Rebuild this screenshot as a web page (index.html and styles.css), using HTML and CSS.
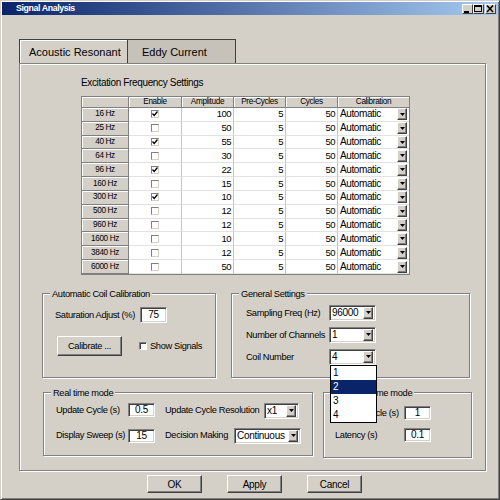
FILE: index.html
```html
<!DOCTYPE html>
<html>
<head>
<meta charset="utf-8">
<link rel="stylesheet" href="styles.css">
</head>
<body>
<div class="window">
  <div class="titlebar">
    <span class="title">Signal Analysis</span>
    <div class="wbtns">
      <span class="wb"><svg width="9" height="8" viewBox="0 0 9 8"><rect x="1" y="6" width="5" height="2" fill="#000"/></svg></span>
      <span class="wb"><svg width="9" height="8" viewBox="0 0 9 8"><rect x="0.5" y="0.5" width="7" height="6" fill="none" stroke="#000"/><rect x="0" y="0" width="8" height="2" fill="#000"/></svg></span>
      <span class="wb close"><svg width="9" height="8" viewBox="0 0 9 8"><path d="M1 0.5l6 6.5M7 0.5l-6 6.5" stroke="#000" stroke-width="1.6"/></svg></span>
    </div>
  </div>
  <div class="client">
    <div class="tabs">
      <div class="tab t1">Acoustic Resonant</div>
      <div class="tab t2">Eddy Current</div>
    </div>
    <div class="panel">
      <div class="section-title">Excitation Frequency Settings</div>
      <div class="grid">
        <div class="h"></div><div class="h">Enable</div><div class="h">Amplitude</div><div class="h">Pre-Cycles</div><div class="h">Cycles</div><div class="h last">Calibration</div>

        <div class="h">16 Hz</div><div class="c cbc"><span class="cb"><svg width="6" height="6" viewBox="0 0 6 6"><path d="M0.5 2.5l1.7 2 3.3-4" stroke="#000" stroke-width="1.3" fill="none"/></svg></span></div><div class="c">100</div><div class="c">5</div><div class="c">50</div><div class="c cal"><span>Automatic</span><span class="dd"><svg width="5" height="3" viewBox="0 0 5 3"><path d="M0 0h5L2.5 3z"/></svg></span></div>
        <div class="h">25 Hz</div><div class="c cbc"><span class="cb"></span></div><div class="c">50</div><div class="c">5</div><div class="c">50</div><div class="c cal"><span>Automatic</span><span class="dd"><svg width="5" height="3" viewBox="0 0 5 3"><path d="M0 0h5L2.5 3z"/></svg></span></div>
        <div class="h">40 Hz</div><div class="c cbc"><span class="cb"><svg width="6" height="6" viewBox="0 0 6 6"><path d="M0.5 2.5l1.7 2 3.3-4" stroke="#000" stroke-width="1.3" fill="none"/></svg></span></div><div class="c">55</div><div class="c">5</div><div class="c">50</div><div class="c cal"><span>Automatic</span><span class="dd"><svg width="5" height="3" viewBox="0 0 5 3"><path d="M0 0h5L2.5 3z"/></svg></span></div>
        <div class="h">64 Hz</div><div class="c cbc"><span class="cb"></span></div><div class="c">30</div><div class="c">5</div><div class="c">50</div><div class="c cal"><span>Automatic</span><span class="dd"><svg width="5" height="3" viewBox="0 0 5 3"><path d="M0 0h5L2.5 3z"/></svg></span></div>
        <div class="h">96 Hz</div><div class="c cbc"><span class="cb"><svg width="6" height="6" viewBox="0 0 6 6"><path d="M0.5 2.5l1.7 2 3.3-4" stroke="#000" stroke-width="1.3" fill="none"/></svg></span></div><div class="c">22</div><div class="c">5</div><div class="c">50</div><div class="c cal"><span>Automatic</span><span class="dd"><svg width="5" height="3" viewBox="0 0 5 3"><path d="M0 0h5L2.5 3z"/></svg></span></div>
        <div class="h">160 Hz</div><div class="c cbc"><span class="cb"></span></div><div class="c">15</div><div class="c">5</div><div class="c">50</div><div class="c cal"><span>Automatic</span><span class="dd"><svg width="5" height="3" viewBox="0 0 5 3"><path d="M0 0h5L2.5 3z"/></svg></span></div>
        <div class="h">300 Hz</div><div class="c cbc"><span class="cb"><svg width="6" height="6" viewBox="0 0 6 6"><path d="M0.5 2.5l1.7 2 3.3-4" stroke="#000" stroke-width="1.3" fill="none"/></svg></span></div><div class="c">10</div><div class="c">5</div><div class="c">50</div><div class="c cal"><span>Automatic</span><span class="dd"><svg width="5" height="3" viewBox="0 0 5 3"><path d="M0 0h5L2.5 3z"/></svg></span></div>
        <div class="h">500 Hz</div><div class="c cbc"><span class="cb"></span></div><div class="c">12</div><div class="c">5</div><div class="c">50</div><div class="c cal"><span>Automatic</span><span class="dd"><svg width="5" height="3" viewBox="0 0 5 3"><path d="M0 0h5L2.5 3z"/></svg></span></div>
        <div class="h">960 Hz</div><div class="c cbc"><span class="cb"></span></div><div class="c">12</div><div class="c">5</div><div class="c">50</div><div class="c cal"><span>Automatic</span><span class="dd"><svg width="5" height="3" viewBox="0 0 5 3"><path d="M0 0h5L2.5 3z"/></svg></span></div>
        <div class="h">1600 Hz</div><div class="c cbc"><span class="cb"></span></div><div class="c">10</div><div class="c">5</div><div class="c">50</div><div class="c cal"><span>Automatic</span><span class="dd"><svg width="5" height="3" viewBox="0 0 5 3"><path d="M0 0h5L2.5 3z"/></svg></span></div>
        <div class="h">3840 Hz</div><div class="c cbc"><span class="cb"></span></div><div class="c">12</div><div class="c">5</div><div class="c">50</div><div class="c cal"><span>Automatic</span><span class="dd"><svg width="5" height="3" viewBox="0 0 5 3"><path d="M0 0h5L2.5 3z"/></svg></span></div>
        <div class="h">6000 Hz</div><div class="c cbc"><span class="cb"></span></div><div class="c">50</div><div class="c">5</div><div class="c">50</div><div class="c cal"><span>Automatic</span><span class="dd"><svg width="5" height="3" viewBox="0 0 5 3"><path d="M0 0h5L2.5 3z"/></svg></span></div>
      </div>

      <div class="grow1">
        <fieldset class="group acc">
          <legend>Automatic Coil Calibration</legend>
          <div class="frow r-sat">
            <span class="lbl w-sat">Saturation Adjust (%)</span>
            <span class="tb tb-sat">75</span>
          </div>
          <div class="frow r-cal">
            <span class="btn btn-cal">Calibrate ...</span>
            <span class="chk"></span>
            <span class="lbl">Show Signals</span>
          </div>
        </fieldset>
        <fieldset class="group gen">
          <legend>General Settings</legend>
          <div class="frow r-gen first">
            <span class="lbl w-gen">Sampling Freq (Hz)</span>
            <span class="select s47"><span class="val">96000</span><span class="dd"><svg width="5" height="3" viewBox="0 0 5 3"><path d="M0 0h5L2.5 3z"/></svg></span></span>
          </div>
          <div class="frow r-gen">
            <span class="lbl w-gen">Number of Channels</span>
            <span class="select s47"><span class="val">1</span><span class="dd"><svg width="5" height="3" viewBox="0 0 5 3"><path d="M0 0h5L2.5 3z"/></svg></span></span>
          </div>
          <div class="frow r-gen">
            <span class="lbl w-gen">Coil Number</span>
            <span class="select s47 open"><span class="val">4</span><span class="dd"><svg width="5" height="3" viewBox="0 0 5 3"><path d="M0 0h5L2.5 3z"/></svg></span>
              <span class="droplist">
                <span class="item">1</span>
                <span class="item sel">2</span>
                <span class="item">3</span>
                <span class="item">4</span>
              </span>
            </span>
          </div>
        </fieldset>
      </div>

      <div class="grow2">
        <fieldset class="group rt1">
          <legend>Real time mode</legend>
          <div class="frow r-rt first">
            <span class="lbl w-rt1">Update Cycle (s)</span>
            <span class="tb tb-rt">0.5</span>
            <span class="lbl w-res">Update Cycle Resolution</span>
            <span class="select s35"><span class="val">x1</span><span class="dd"><svg width="5" height="3" viewBox="0 0 5 3"><path d="M0 0h5L2.5 3z"/></svg></span></span>
          </div>
          <div class="frow r-rt second">
            <span class="lbl w-rt1">Display Sweep (s)</span>
            <span class="tb tb-rt tb-low">15</span>
            <span class="lbl w-dec">Decision Making</span>
            <span class="select s67"><span class="val">Continuous</span><span class="dd"><svg width="5" height="3" viewBox="0 0 5 3"><path d="M0 0h5L2.5 3z"/></svg></span></span>
          </div>
        </fieldset>
        <fieldset class="group rt2">
          <legend>Real time mode</legend>
          <div class="frow r-rt2 first">
            <span class="lbl w-rt2 upd2">Update Cycle (s)</span>
            <span class="tb tb-rt">1</span>
          </div>
          <div class="frow r-rt2 second">
            <span class="lbl w-rt2">Latency (s)</span>
            <span class="tb tb-rt">0.1</span>
          </div>
        </fieldset>
      </div>
    </div>
    <div class="buttons">
      <span class="btn dlg">OK</span>
      <span class="btn dlg">Apply</span>
      <span class="btn dlg">Cancel</span>
    </div>
  </div>
</div>
</body>
</html>
```
FILE: styles.css
```css
* { box-sizing: border-box; }
html, body { margin: 0; padding: 0; }
body {
  background: #d4d0c8;
  font-family: "Liberation Sans", Arial, sans-serif;
  font-size: 9.3px;
  letter-spacing: -0.35px;
  color: #000;
}
.window {
  width: 500px;
  height: 500px;
  background: #d4d0c8;
  border: 1px solid;
  border-color: #d4d0c8 #404040 #404040 #d4d0c8;
  box-shadow: inset 1px 1px 0 #fff, inset -1px -1px 0 #808080;
  padding: 1px;
  display: flex;
  flex-direction: column;
}
.titlebar {
  height: 13px;
  background: linear-gradient(to right, #0a246a, #a6caf0);
  display: flex;
  align-items: center;
  justify-content: space-between;
  padding: 0 2px 0 14px;
}
.title {
  color: #fff;
  font-weight: bold;
  font-size: 8.8px;
  letter-spacing: -0.4px;
  line-height: 13px;
}
.wbtns { display: flex; }
.wb {
  width: 11px;
  height: 10px;
  background: #d4d0c8;
  border: 1px solid;
  border-color: #fff #404040 #404040 #fff;
  display: flex;
  align-items: center;
  justify-content: center;
}
.wb.close { margin-left: 1px; }
.wb svg { display: block; }

.client { display: flex; flex-direction: column; }
.tabs {
  display: flex;
  margin: 24px 0 0 17px;
  height: 24px;
}
.tab {
  height: 24px;
  border: 1px solid #404040;
  border-bottom: none;
  font-size: 11px;
  letter-spacing: 0;
  display: flex;
  align-items: center;
  padding-top: 1px;
}
.t1 {
  width: 108px;
  border-right: none;
  padding-left: 9px;
  background: #d4d0c8;
  box-shadow: inset 1px 1px 0 #fff;
}
.t2 {
  width: 109px;
  padding-left: 14px;
  background: #c6c2ba;
}
.panel {
  margin-left: 17px;
  width: 467px;
  height: 408px;
  border: 1px solid #808080;
  box-shadow: inset 1px 1px 0 #fff, 1px 1px 0 #fff;
  display: flex;
  flex-direction: column;
}
.section-title {
  margin: 13px 0 7px 61px;
  line-height: 12px;
  font-size: 10px;
}
.grid {
  margin-left: 61px;
  width: 329px;
  display: grid;
  grid-template-columns: 47px 53px 52px 52px 52px 71px;
  grid-template-rows: 11px repeat(12, 13.83px);
  border: 1px solid #808080;
  background: #fff;
}
.h {
  background: #d4d0c8;
  border-right: 1px solid #808080;
  border-bottom: 1px solid #808080;
  box-shadow: inset 1px 1px 0 #fff;
  display: flex;
  align-items: center;
  justify-content: center;
  font-size: 8.2px;
  letter-spacing: -0.35px;
  line-height: 10px;
}
.h.last { border-right: none; }
.c {
  background: #fff;
  border-right: 1px solid #c4c4c4;
  border-bottom: 1px solid #e2e2e2;
  display: flex;
  align-items: center;
  justify-content: flex-end;
  padding-right: 2px;
  font-size: 9.5px;
  letter-spacing: -0.5px;
  line-height: 12px;
}
.c.cbc { justify-content: center; padding-right: 0; }
.c.cal {
  border-right: none;
  justify-content: space-between;
  padding: 0 2px 0 2px;
  font-size: 10px;
  letter-spacing: -0.4px;
}
.cb {
  width: 8px;
  height: 8px;
  border: 1px solid;
  border-color: #808080 #d4d0c8 #d4d0c8 #808080;
  background: #fff;
  display: flex;
  align-items: center;
  justify-content: center;
}
.cb svg { display: block; }
.dd {
  width: 10px;
  height: 12px;
  background: #d4d0c8;
  border: 1px solid;
  border-color: #fff #404040 #404040 #fff;
  box-shadow: inset -1px -1px 0 #808080;
  display: flex;
  align-items: center;
  justify-content: center;
  flex: none;
}
.dd svg { display: block; }

/* group boxes */
.grow1 { display: flex; margin-top: 13px; }
.grow2 { display: flex; margin-top: 9px; }
.group {
  margin: 0;
  padding: 0;
  min-width: 0;
  border: 1px solid #808080;
  box-shadow: inset 1px 1px 0 #fff, 1px 1px 0 #fff;
}
.group legend {
  margin-left: 7px;
  padding: 0 2px;
  line-height: 12px;
  font-size: 9.3px;
  background: #d4d0c8;
}
.rt2 legend { margin-left: 26px; }
.acc { margin-left: 22px; width: 174px; height: 90px; }
.gen { margin-left: 15px; width: 239px; height: 90px; }
.rt1 { margin-left: 23px; width: 270px; height: 69px; }
.rt2 { margin-left: 10px; width: 149px; height: 71px; }

.frow { display: flex; align-items: center; }
.lbl { line-height: 12px; white-space: nowrap; flex: none; }

.r-sat { margin-top: 7px; padding-left: 12px; }
.w-sat { width: 85px; }
.r-cal { margin-top: 13px; padding-left: 14px; }
.btn-cal { width: 65px; height: 20px; }
.chk {
  width: 8px;
  height: 8px;
  margin: 0 3px 0 17px;
  background: #fff;
  border: 1px solid;
  border-color: #808080 #fff #fff #808080;
  box-shadow: inset 1px 1px 0 #404040;
  flex: none;
}

.r-gen { padding-left: 14px; margin-top: 6px; }
.r-gen.first { margin-top: 5px; }
.w-gen { width: 83px; }

.r-rt { padding-left: 12px; align-items: flex-start; }
.r-rt.first { margin-top: 4px; }
.r-rt.second { margin-top: 9px; }
.r-rt .lbl { line-height: 14px; }
.w-rt1 { width: 72px; }
.w-res { width: 99px; margin-left: 10px; }
.w-dec { width: 69px; margin-left: 10px; }
.tb-low { margin-top: 1px; }

.r-rt2 { padding-left: 11px; }
.r-rt2.first { margin-top: 7px; }
.r-rt2.second { margin-top: 8px; }
.w-rt2 { width: 69px; }
.w-rt2.upd2 { text-align: right; padding-right: 10px; }

/* controls */
.tb {
  width: 27px;
  height: 16px;
  background: #fff;
  border: 1px solid;
  border-color: #808080 #fff #fff #808080;
  box-shadow: inset 1px 1px 0 #404040, inset -1px -1px 0 #d4d0c8;
  display: flex;
  align-items: center;
  justify-content: center;
  line-height: 12px;
  font-size: 10px;
  letter-spacing: -0.3px;
  flex: none;
}
.tb-rt { height: 14px; }
.select {
  position: relative;
  height: 16px;
  background: #fff;
  border: 1px solid;
  border-color: #808080 #fff #fff #808080;
  box-shadow: inset 1px 1px 0 #404040, inset -1px -1px 0 #d4d0c8;
  display: flex;
  align-items: center;
  padding: 2px 2px 2px 2px;
  font-size: 10px;
  letter-spacing: -0.3px;
  flex: none;
}
.select .val { flex: 1; line-height: 12px; white-space: nowrap; }
.s47 { width: 47px; }
.s35 { width: 35px; }
.s67 { width: 67px; }
.droplist {
  position: absolute;
  left: 0;
  top: 15px;
  width: 47px;
  background: #fff;
  border: 1px solid #000;
  z-index: 10;
  display: flex;
  flex-direction: column;
}
.item {
  height: 14px;
  line-height: 14px;
  padding-left: 2px;
}
.item.sel { background: #0a246a; color: #fff; }

.btn {
  background: #d4d0c8;
  border: 1px solid;
  border-color: #fff #404040 #404040 #fff;
  box-shadow: inset -1px -1px 0 #808080;
  display: flex;
  align-items: center;
  justify-content: center;
  flex: none;
}
.buttons {
  display: flex;
  margin: 4px 0 0 145px;
  gap: 25px;
}
.btn.dlg { width: 55px; height: 18px; font-size: 10px; letter-spacing: -0.3px; }
```
